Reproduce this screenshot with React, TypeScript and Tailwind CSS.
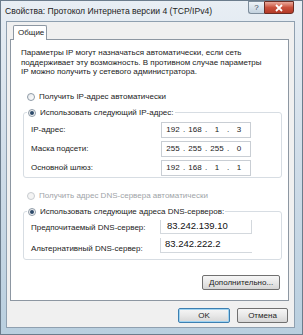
function Radio({ checked, disabled }: { checked?: boolean; disabled?: boolean }) {
  return (
    <span
      className={`flex items-center justify-center w-[8px] h-[8px] rounded-full border ${
        disabled ? "border-[#c8ccd0] bg-[#f4f4f4]" : "border-[#8e9aa6] bg-gradient-to-br from-[#e6e9ec] to-[#ffffff]"
      }`}
    >
      {checked && <span className="w-[4px] h-[4px] rounded-full bg-[#2d4a6a]" />}
    </span>
  );
}

function IpField({ parts }: { parts: string[] }) {
  return (
    <div className="flex items-center w-[90px] h-[16px] border border-[#c9ced4] bg-white pl-[2px] text-[#222]">
      {parts.map((p, i) => (
        <div key={i} className="flex items-center">
          {i > 0 && <span className="w-[4px] text-center">.</span>}
          <span className="w-[18px] text-center">{p}</span>
        </div>
      ))}
    </div>
  );
}

function WinButton({ label, width, primary }: { label: string; width: string; primary?: boolean }) {
  return (
    <div
      className={`${width} h-[15px] flex items-center justify-center rounded-[2px] border text-[8px] text-[#222] bg-gradient-to-b from-[#f6f6f6] via-[#e8e8e8] to-[#d6d6d6] ${
        primary ? "border-[#3c7fb1] shadow-[inset_0_0_0_1px_#9fd3f1]" : "border-[#707070]"
      }`}
    >
      {label}
    </div>
  );
}

export default function App() {
  return (
    <div
      className="w-[303px] h-[335px] flex flex-col bg-gradient-to-b from-[#e8eef4] via-[#cfdce8] to-[#b9cfdf] border border-[#6b7c8c] overflow-hidden"
      style={{ fontFamily: '"Liberation Sans", Arial, sans-serif' }}
    >
      {/* title bar */}
      <div className="h-[20px] flex items-start pl-[4px] pr-[8px] shrink-0">
        <span className="self-center text-[8.6px] text-[#1c1c1c] whitespace-nowrap">
          Свойства: Протокол Интернета версии 4 (TCP/IPv4)
        </span>
        <div className="ml-auto flex">
          <div className="w-[16px] h-[13px] flex items-center justify-center border border-[#7d8d9c] border-r-0 rounded-bl-[3px] bg-gradient-to-b from-[#eef3f8] to-[#c3d2df] text-[8px] text-[#3a4a5a]">
            ?
          </div>
          <div className="w-[30px] h-[13px] flex items-center justify-center border border-[#6b2d24] rounded-br-[3px] bg-gradient-to-b from-[#e9a99c] via-[#c9503c] to-[#b33a27]">
            <svg width="10" height="8" viewBox="0 0 10 8">
              <path d="M2 1 L8 7 M8 1 L2 7" stroke="#ffffff" strokeWidth="1.8" />
            </svg>
          </div>
        </div>
      </div>

      {/* dialog body */}
      <div className="ml-[5px] mr-[7px] mb-[6px] flex-1 bg-[#f0f0f0] border border-[#8fa0b0] flex flex-col text-[8px] text-[#222]">
        <div className="flex pl-[6px] pt-[3px]">
          <div className="relative z-10 -mb-[1px] w-[34px] h-[15px] bg-white border border-[#8d97a2] border-b-0 rounded-t-[2px] pl-[4px] flex items-center">
            Общие
          </div>
        </div>

        <div className="ml-[3px] w-[279px] h-[262px] bg-white border border-[#8d97a2] flex flex-col pt-[8px]">
          <p className="pl-[10px] leading-[9.5px] whitespace-nowrap">
            Параметры IP могут назначаться автоматически, если сеть
            <br />
            поддерживает эту возможность. В противном случае параметры
            <br />
            IP можно получить у сетевого администратора.
          </p>

          <div className="mt-[15px] ml-[16px] flex items-center gap-[4px] h-[10px]">
            <Radio />
            <span>Получить IP-адрес автоматически</span>
          </div>

          <fieldset className="mt-[6px] ml-[12px] w-[259px] border border-[#d7dde3] rounded-[3px] pl-[3px] pb-[1px]">
            <legend className="px-[1px]">
              <div className="flex items-center gap-[4px] h-[10px]">
                <Radio checked />
                <span>Использовать следующий IP-адрес:</span>
              </div>
            </legend>
            <div className="flex flex-col gap-[3px] pt-[4px] pl-[4px]">
              {[
                ["IP-адрес:", ["192", "168", "1", "3"]],
                ["Маска подсети:", ["255", "255", "255", "0"]],
                ["Основной шлюз:", ["192", "168", "1", "1"]],
              ].map(([label, parts]) => (
                <div key={label as string} className="flex items-center">
                  <span className="w-[130px]">{label as string}</span>
                  <IpField parts={parts as string[]} />
                </div>
              ))}
            </div>
          </fieldset>

          <div className="mt-[13px] ml-[16px] flex items-center gap-[4px] h-[10px] text-[#a0a4a8]">
            <Radio disabled />
            <span>Получить адрес DNS-сервера автоматически</span>
          </div>

          <fieldset className="mt-[6px] ml-[12px] w-[259px] border border-[#d7dde3] rounded-[3px] pl-[3px] pb-[4px]">
            <legend className="px-[1px]">
              <div className="flex items-center gap-[4px] h-[10px]">
                <Radio checked />
                <span>Использовать следующие адреса DNS-серверов:</span>
              </div>
            </legend>
            <div className="flex flex-col gap-[2px] pt-[3px] pl-[4px]">
              <div className="flex items-center">
                <span className="w-[129px] pt-[2px]">Предпочитаемый DNS-сервер:</span>
                <div className="w-[92px] h-[14px] border border-[#d3d8dd] border-t-0 bg-white pl-[6px] flex items-center text-[9.5px] text-[#111]">
                  83.242.139.10
                </div>
              </div>
              <div className="flex items-center">
                <span className="w-[129px] pt-[7px]">Альтернативный DNS-сервер:</span>
                <div className="w-[92px] h-[15px] border border-[#d3d8dd] border-t-0 border-r-0 bg-white pl-[4px] flex items-start text-[9.5px] text-[#111] leading-[11px]">
                  83.242.222.2
                </div>
              </div>
            </div>
          </fieldset>

          <div className="mt-auto mb-[10px] pr-[8px] flex justify-end">
            <WinButton label="Дополнительно..." width="w-[78px]" />
          </div>
        </div>

        <div className="mt-[7px] pr-[6px] flex justify-end gap-[7px]">
          <WinButton label="OK" width="w-[52px]" primary />
          <WinButton label="Отмена" width="w-[51px]" />
        </div>
      </div>
    </div>
  );
}
